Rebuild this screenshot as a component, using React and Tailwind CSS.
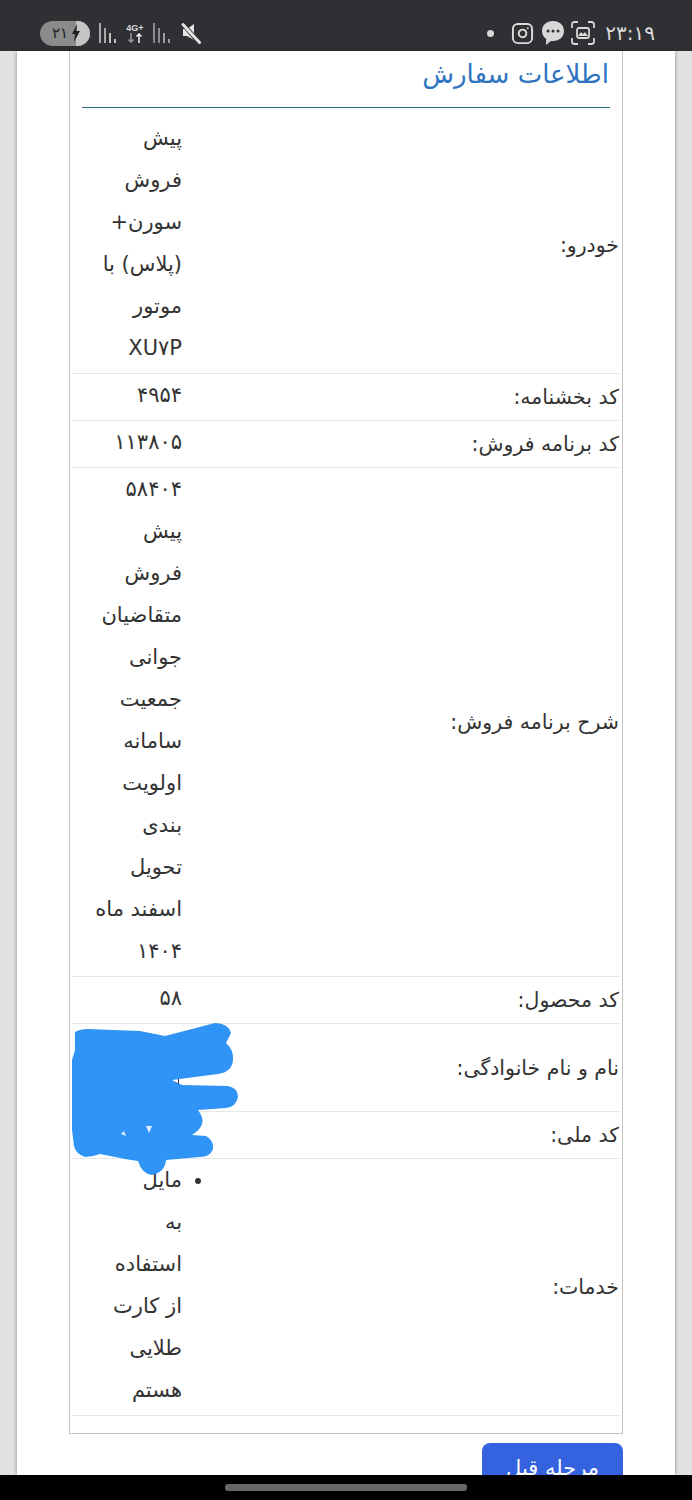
import React from "react";
import { Instagram } from "lucide-react";

const rows = [
  { label: "خودرو:", lines: ["پیش", "فروش", "سورن+", "(پلاس) با", "موتور", "XU۷P"] },
  { label: "کد بخشنامه:", lines: ["۴۹۵۴"] },
  { label: "کد برنامه فروش:", lines: ["۱۱۳۸۰۵"] },
  { label: "شرح برنامه فروش:", lines: ["۵۸۴۰۴", "پیش", "فروش", "متقاضیان", "جوانی", "جمعیت", "سامانه", "اولویت", "بندی", "تحویل", "اسفند ماه", "۱۴۰۴"] },
  { label: "کد محصول:", lines: ["۵۸"] },
  { label: "نام و نام خانوادگی:", lines: ["", ""], tight: true },
  { label: "کد ملی:", lines: [""] },
];
const services = ["مایل", "به", "استفاده", "از کارت", "طلایی", "هستم"];

function Signal({ dim }) {
  return (
    <svg width="18" height="22" viewBox="0 0 18 22" className={dim ? "opacity-60" : "opacity-80"}>
      <rect x="0" y="1" width="2" height="20" fill="#c9c9c9" />
      <rect x="5" y="6" width="2" height="15" fill="#c9c9c9" />
      <rect x="10" y="11" width="2" height="10" fill="#e5e5e5" />
      <rect x="15" y="17" width="2" height="4" fill="#e5e5e5" />
    </svg>
  );
}

function StatusBar() {
  return (
    <div dir="ltr" className="flex h-[51px] shrink-0 items-center justify-between bg-[#2f3033] pl-[40px] pr-[37px] pt-[15px] text-[#dcdcdc]">
      <div className="flex items-center">
        <div className="flex h-[25px] w-[50px] items-center overflow-hidden rounded-full bg-[#8b8b8b]">
          <span className="flex flex-1 justify-center pl-1 text-[15px] leading-none text-[#222]">۲۱</span>
          <span className="flex h-full w-[14px] items-center bg-[#c4c4c4]">
            <svg width="10" height="18" viewBox="0 0 10 18" className="-ml-[5px]"><path d="M6 0 1 10h3l-1 8 6-11H5.500z" fill="#222" /></svg>
          </span>
        </div>
        <div className="ml-[9px]"><Signal /></div>
        <div className="ml-[8px] flex w-[20px] flex-col items-center text-[9px] font-bold leading-[10px]" style={{ fontFamily: "'Liberation Sans', sans-serif" }}>
          <span>4G+</span>
          <svg width="16" height="10" viewBox="0 0 16 10" fill="none" strokeWidth="1.500"><path d="M4 0v9M1.500 6.500 4 9l2.500-2.500" stroke="#999" /><path d="M12 10V1M9.500 3.500 12 1l2.500 2.500" stroke="#eee" /></svg>
        </div>
        <div className="ml-[8px]"><Signal dim /></div>
        <svg width="20" height="22" viewBox="0 0 20 22" className="ml-[10px]">
          <path d="M2 7h4l7-5v16L6 14H2z" fill="#e4e4e4" />
          <path d="M1.500 1.500 18 20.500" stroke="#2f3033" strokeWidth="4.500" />
          <path d="M2 2.500 18.500 20.500" stroke="#e4e4e4" strokeWidth="3" strokeLinecap="round" />
        </svg>
      </div>
      <div className="flex items-center">
        <span className="mr-[17px] size-[7px] rounded-full bg-[#d8d8d8]" />
        <Instagram size={23} strokeWidth={2} className="mr-[7px]" />
        <svg width="24" height="26" viewBox="0 0 24 26" className="mr-[6px]">
          <path d="M12 1C5.500 1 1 5.300 1 11c0 3.400 1.600 6.200 4.200 8l-.2 6 5-4.100c.6.100 1.300.1 2 .1 6.500 0 11-4.300 11-10S18.500 1 12 1z" fill="#d8d8d8" />
          <circle cx="7" cy="11" r="1.500" fill="#2f3033" /><circle cx="12" cy="11" r="1.500" fill="#2f3033" /><circle cx="17" cy="11" r="1.500" fill="#2f3033" />
        </svg>
        <svg width="24" height="24" viewBox="0 0 24 24" fill="none" stroke="#d8d8d8" strokeWidth="1.800" className="mr-[10px]">
          <path d="M1 7V3.500A2.500 2.500 0 0 1 3.500 1H7M17 1h3.500A2.500 2.500 0 0 1 23 3.500V7M23 17v3.500a2.500 2.500 0 0 1-2.500 2.500H17M7 23H3.500A2.500 2.500 0 0 1 1 20.500V17" />
          <rect x="6" y="7" width="12" height="10" rx="2" />
          <path d="M7 15l3-4 2 2 2-2 3 4z" fill="#d8d8d8" stroke="none" />
        </svg>
        <span className="text-[20px] font-medium leading-none tracking-[1px]">۲۳:۱۹</span>
      </div>
    </div>
  );
}

function Row({ label, tight, children }) {
  return (
    <div className="flex items-center border-b border-[#e8e8e8]">
      <div className="flex-1 whitespace-nowrap pr-[1px] text-[20.500px] leading-[30px] text-[#333]">{label}</div>
      <div className={tight ? "w-[110px] pb-[3px]" : "w-[110px] pb-[4px]"}>{children}</div>
    </div>
  );
}

function Lines({ lines }) {
  return lines.map((l, i) => (
    <div key={i} className="h-[42px] whitespace-nowrap leading-[42px]">{l}</div>
  ));
}

export default function App() {
  return (
    <div dir="rtl" className="relative flex h-[1500px] w-[692px] flex-col overflow-hidden bg-[#e2e2e2]" style={{ fontFamily: "'DejaVu Sans', sans-serif" }}>
      <StatusBar />
      <div className="mx-[17px] min-h-0 flex-1 overflow-hidden bg-white px-[52px] shadow-[0_0_4px_rgba(0,0,0,0.4)]">
        <div className="border-x border-b border-[#c4c4c4] px-[2px] pb-[17px]">
          <div className="mx-[10px] border-b border-[#2a7280] pb-[12px] pt-[3px]">
            <h2 className="pr-[1px] text-[26px] leading-[41px] text-[#2f74c0]">اطلاعات سفارش</h2>
          </div>
          <div className="mt-[9px] text-[21px] text-[#333]">
            {rows.map((r) => (
              <Row key={r.label} label={r.label} tight={r.tight}><Lines lines={r.lines} /></Row>
            ))}
            <Row label="خدمات:">
              <ul className="list-disc">
                <li><Lines lines={services} /></li>
              </ul>
            </Row>
          </div>
        </div>
        <div className="mt-[9px] flex justify-start">
          <button className="h-[60px] w-[141px] rounded-[8px] bg-[#3563e0] pb-[8px] text-[21px] text-white">مرحله قبل</button>
        </div>
      </div>
      <div className="flex h-[25px] shrink-0 items-center justify-center bg-black">
        <div className="h-[7px] w-[242px] rounded-[3px] bg-[#666]" />
      </div>
      <svg className="pointer-events-none absolute left-0 top-0" width="692" height="1500" viewBox="0 0 692 1500">
        <path d="M75 1032 Q80 1029 88 1029 L140 1031 L165 1036 L215 1023 Q228 1023 231 1033 L226 1043 Q234 1050 233 1060 Q232 1072 218 1074 L172 1080 L182 1085 L228 1086 Q238 1088 238 1097 Q236 1107 226 1108 L198 1110 Q204 1118 202 1124 Q200 1130 192 1135 L206 1136 Q214 1140 213 1149 Q210 1157 200 1157 L166 1160 Q165 1172 152 1175 Q142 1174 138 1161 L125 1159 L100 1154 Q92 1157 85 1157 Q76 1154 74 1146 L72 1130 L72 1060 L75 1050 Z" fill="#3093f6" />
        <path d="M146 1126l6 0-3 7z" fill="#dff0ff" />
        <path d="M121 1134l3-3 2 5z" fill="#dff0ff" />
        <rect x="178" y="1079" width="1" height="5" fill="#333" />
      </svg>
    </div>
  );
}
